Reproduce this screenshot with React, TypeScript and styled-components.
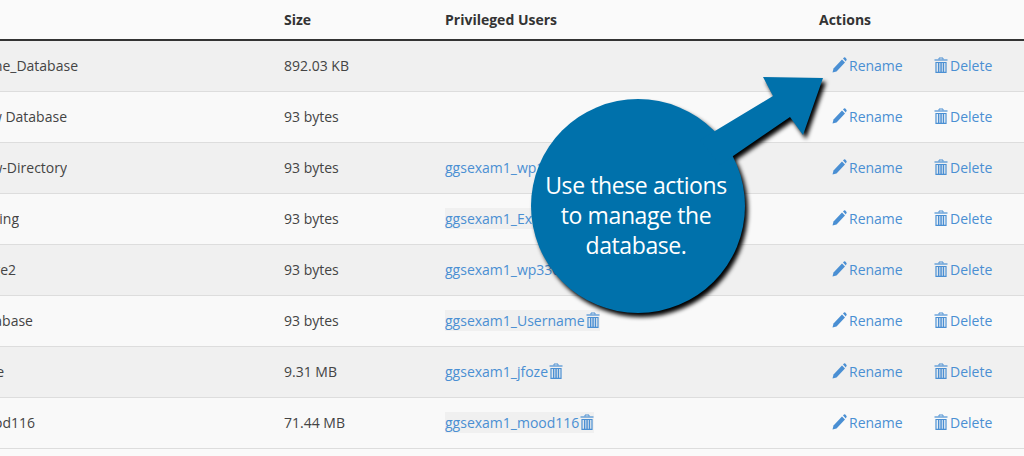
import React from "react";
import styled, { createGlobalStyle } from "styled-components";

const Global = createGlobalStyle`
  html, body { margin: 0; padding: 0; background: #fafafa; overflow: hidden; }
  body { width: 1024px; height: 456px; font-family: "Open Sans", "Liberation Sans", sans-serif; font-size: 14px; color: #444; }
`;

const Page = styled.div`
  position: relative;
  width: 1024px;
  height: 456px;
  overflow: hidden;
`;

const columns = "284px 161px 374px 1fr";

const HeaderRow = styled.div`
  display: grid;
  grid-template-columns: ${columns};
  height: 39px;
  align-items: center;
  border-bottom: 2px solid #333;
  font-weight: 700;
  color: #333;
  line-height: 40px;
`;

const Row = styled.div<{ $odd: boolean }>`
  display: grid;
  grid-template-columns: ${columns};
  box-sizing: border-box;
  height: 51px;
  padding-bottom: 2px;
  align-items: center;
  border-bottom: 1px solid #ddd;
  background: ${(p) => (p.$odd ? "#f0f0f0" : "#f9f9f9")};
`;

const NameCell = styled.div<{ $end: number }>`
  display: flex;
  justify-content: flex-end;
  width: ${(p) => p.$end}px;
  overflow: hidden;
  white-space: nowrap;
`;

const UserTag = styled.span`
  display: inline-flex;
  align-items: center;
  gap: 1px;
  height: 21px;
  background: #f0f0f0;
  color: #4a8fd3;
`;

const Actions = styled.div`
  display: flex;
  padding-left: 13px;
  color: #4a8fd3;
`;

const Action = styled.span<{ $w: number }>`
  display: inline-flex;
  align-items: center;
  width: ${(p) => p.$w}px;
  gap: 3px;
`;

const Glyph = styled.svg`
  flex: none;
  display: block;
`;

const Callout = styled.div`
  position: absolute;
  left: 520px;
  top: 60px;
  width: 320px;
  height: 270px;
`;

const CalloutArt = styled.svg`
  position: absolute;
  inset: 0;
  filter: drop-shadow(3px 4px 2px #000);
`;

const CalloutText = styled.div`
  position: absolute;
  left: 9px;
  top: 110px;
  width: 214px;
  text-align: center;
  color: #fff;
  font-size: 23px;
  line-height: 30px;
  letter-spacing: -0.4px;
`;

const Trash = () => (
  <Glyph width="14" height="16" viewBox="0 0 14 16">
    <path fill="none" stroke="currentColor" d="M5 2.5V1h4v1.5" />
    <path fill="none" stroke="currentColor" strokeWidth="1.2" d="M0.5 3h13" />
    <path fill="none" stroke="currentColor" strokeWidth="1.2" d="M2 5.5h10v9.8H2z" />
    <path fill="currentColor" d="M3.9 6h1.5v9H3.9zM6.3 6h1.5v9H6.3zM8.7 6h1.5v9H8.7z" />
  </Glyph>
);

const Pencil = () => (
  <Glyph width="15" height="16" viewBox="0 0 15 16">
    <path fill="currentColor" d="M0.5 15.5L1.5 11.5L10 2.5L13 5.5L4.5 14.5Z" />
    <path fill="currentColor" d="M11 1.5L12 0.5Q12.6 0 13.3 0.6L14.5 1.9Q15 2.6 14.4 3.2L13.8 4.5Z" />
  </Glyph>
);

const rows = [
  { name: "me_Database", end: 78, size: "892.03 KB" },
  { name: "w Database", end: 67, size: "93 bytes" },
  { name: "w-Directory", end: 67, size: "93 bytes", user: "ggsexam1_wp1" },
  { name: "ting", end: 19, size: "93 bytes", user: "ggsexam1_Example" },
  { name: "ge2", end: 16, size: "93 bytes", user: "ggsexam1_wp330" },
  { name: "abase", end: 33, size: "93 bytes", user: "ggsexam1_Username" },
  { name: "ze", end: 4, size: "9.31 MB", user: "ggsexam1_jfoze" },
  { name: "ood116", end: 35, size: "71.44 MB", user: "ggsexam1_mood116" },
];

export default function App() {
  return (
    <Page>
      <Global />
      <HeaderRow>
        <div />
        <div>Size</div>
        <div>Privileged Users</div>
        <div>Actions</div>
      </HeaderRow>
      {rows.map((r, i) => (
        <Row key={r.name} $odd={i % 2 === 0}>
          <NameCell $end={r.end}>{r.name}</NameCell>
          <div>{r.size}</div>
          <div>
            {r.user && (
              <UserTag>
                {r.user}
                <Trash />
              </UserTag>
            )}
          </div>
          <Actions>
            <Action $w={102}>
              <Pencil />
              <span style={{ marginLeft: -1 }}>Rename</span>
            </Action>
            <Action $w={60}>
              <Trash />
              <span style={{ marginLeft: -1 }}>Delete</span>
            </Action>
          </Actions>
        </Row>
      ))}
      <Callout>
        <CalloutArt viewBox="0 0 320 270" width="320" height="270">
          <circle cx="118" cy="146" r="107" fill="#0071ab" />
          <path fill="#0071ab" d="M243 17 L303 18 L283 75 L270 57 L200 105 L180 80 L253 36 Z" />
        </CalloutArt>
        <CalloutText>
          Use these actions
          <br />
          to manage the
          <br />
          database.
        </CalloutText>
      </Callout>
    </Page>
  );
}
